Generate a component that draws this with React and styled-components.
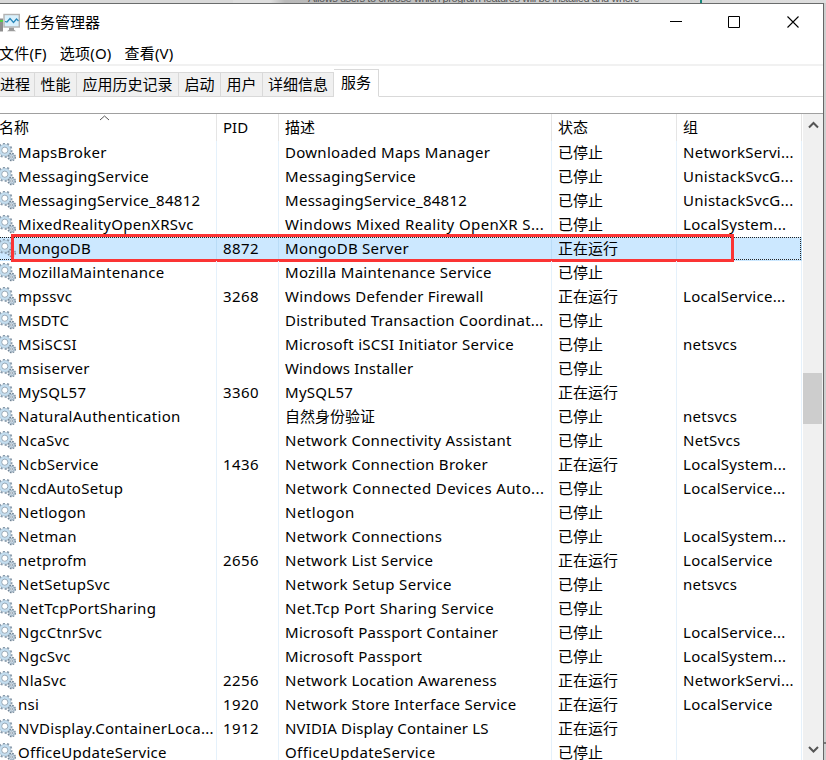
import React from "react";
import styled, { createGlobalStyle, css } from "styled-components";

const GlobalStyle = createGlobalStyle`
  * { box-sizing: border-box; }
  body {
    margin: 0;
    overflow: hidden;
    background: #d2d2d2;
    color: #000;
    font: 15px/24px "Noto Sans", "Noto Sans CJK SC", sans-serif;
  }
`;

const Desktop = styled.div`
  width: 826px;
  height: 760px;
  display: flex;
  flex-direction: column;
  overflow: hidden;
  background: linear-gradient(#cfcfcf 742px, #777 742px, #777 744px, #cfcfcf 744px);
`;

const Backdrop = styled.div`
  height: 3px;
  flex: none;
  display: flex;
  align-items: flex-end;
  overflow: hidden;
  background: linear-gradient(90deg, #d9d9d9 0 233px, #dedede 233px 270px, #b9b9b9 285px, #bebebe 400px, #d5d5d5 600px, #dedede);
`;

const BackdropText = styled.div`
  width: 392px;
  height: 3px;
  margin-left: 308px;
  flex: none;
  display: flex;
  align-items: flex-end;
  border-right: 2px solid #16877b;
  box-sizing: content-box;
  span {
    font: 11px/12px "Liberation Sans", sans-serif;
    letter-spacing: -0.42px;
    color: #555;
    white-space: nowrap;
    margin-bottom: -1px;
  }
`;

const Window = styled.div`
  width: 824px;
  height: 757px;
  display: flex;
  flex-direction: column;
  background: #fff;
  border-top: 1px solid #6a6c6c;
  border-right: 1px solid #666;
`;

const TitleBar = styled.header`
  height: 37px;
  flex: none;
  display: flex;
  align-items: center;
  svg { display: block; }
`;

const Title = styled.h1`
  flex: 1;
  margin: 0 0 2px 5px;
  font: inherit;
`;

const WindowControls = styled.div`
  display: flex;
  gap: 45px;
  padding: 0 23px 1px 0;
`;

const MenuBar = styled.nav`
  height: 25px;
  flex: none;
  display: flex;
  gap: 13px;
  border-bottom: 2px solid #f1f1f1;
`;

const MenuItem = styled.span`
  white-space: nowrap;
  letter-spacing: 0.2px;
  &:first-child { margin-left: -1px; }
`;

const TabStrip = styled.div`
  height: 31px;
  flex: none;
  display: flex;
  align-items: flex-end;
`;

const Tab = styled.div`
  width: ${(p) => p.$w}px;
  height: 25px;
  flex: none;
  line-height: 22px;
  text-align: center;
  white-space: nowrap;
  background: #f0f0f0;
  border: 1px solid #d9d9d9;
  border-left: 0;
  ${(p) => p.$first && css`padding-right: 7px;`}
  ${(p) => p.$active && css`
    height: 28px;
    background: #fff;
    border-bottom-color: #fff;
    line-height: 24px;
  `}
`;

const TabRest = styled.div`
  flex: 1;
  height: 1px;
  background: #d9d9d9;
`;

const ListView = styled.main`
  height: 647px;
  margin-top: 16px;
  flex: none;
  display: flex;
  border-top: 1px solid #a0a0a0;
`;

const Table = styled.div`
  width: 802px;
  flex: none;
`;

const Row = styled.div`
  position: relative;
  height: 24px;
  display: grid;
  grid-template-columns: 217px 62px 273px 125px 125px;
  ${(p) => p.$selected && css`
    background: #cce8ff;
    &::before {
      content: "";
      position: absolute;
      inset: 0 1px 1px 0;
      border: 1px dotted #222;
      border-left: 0;
    }
  `}
`;

const HeaderRow = styled(Row)`
  height: 27px;
`;

const Cell = styled.div`
  min-width: 0;
  height: 24px;
  display: flex;
  align-items: center;
  padding-left: 6px;
  line-height: 22px;
  white-space: nowrap;
  letter-spacing: ${(p) => p.$spacing || 0}px;
  border-right: 1px solid ${(p) => (p.$selected ? "#b9dcf7" : "#e5f1fb")};
  &:first-child { padding-left: 0; }
`;

const HeaderCell = styled(Cell)`
  height: 27px;
  line-height: 27px;
  border-color: #e5e5e5;
  &:first-child { text-indent: -1px; }
`;

const CellText = styled.span`
  padding-bottom: 2px;
`;

const ServiceName = styled(CellText)`
  margin-left: 2px;
`;

const SortArrow = styled.svg`
  position: absolute;
  left: 99px;
  top: 1px;
`;

const Highlight = styled.div`
  position: absolute;
  left: 11px;
  top: -3px;
  width: 723px;
  height: 28px;
  border: 3px solid #fb3434;
`;

const ScrollBar = styled.aside`
  width: 20px;
  margin-left: 1px;
  display: flex;
  flex-direction: column;
  align-items: center;
  background: #f0f0f0;
  svg { flex: none; }
`;

const Thumb = styled.div`
  width: 19px;
  height: 51px;
  margin: 242px 1px 0 0;
  background: #cdcdcd;
`;

const STOPPED = "已停止";
const RUNNING = "正在运行";

const services = [
  ["MapsBroker", "", "Downloaded Maps Manager", STOPPED, "NetworkServi..."],
  ["MessagingService", "", "MessagingService", STOPPED, "UnistackSvcG..."],
  ["MessagingService_84812", "", "MessagingService_84812", STOPPED, "UnistackSvcG..."],
  ["MixedRealityOpenXRSvc", "", "Windows Mixed Reality OpenXR S...", STOPPED, "LocalSystem...", 0.38],
  ["MongoDB", "8872", "MongoDB Server", RUNNING, ""],
  ["MozillaMaintenance", "", "Mozilla Maintenance Service", STOPPED, ""],
  ["mpssvc", "3268", "Windows Defender Firewall", RUNNING, "LocalService..."],
  ["MSDTC", "", "Distributed Transaction Coordinat...", STOPPED, "", 0.23],
  ["MSiSCSI", "", "Microsoft iSCSI Initiator Service", STOPPED, "netsvcs"],
  ["msiserver", "", "Windows Installer", STOPPED, "", 0.15],
  ["MySQL57", "3360", "MySQL57", RUNNING, ""],
  ["NaturalAuthentication", "", "自然身份验证", STOPPED, "netsvcs", 0],
  ["NcaSvc", "", "Network Connectivity Assistant", STOPPED, "NetSvcs"],
  ["NcbService", "1436", "Network Connection Broker", RUNNING, "LocalSystem..."],
  ["NcdAutoSetup", "", "Network Connected Devices Auto...", STOPPED, "LocalService...", 0.38],
  ["Netlogon", "", "Netlogon", STOPPED, "", 0.5],
  ["Netman", "", "Network Connections", STOPPED, "LocalSystem..."],
  ["netprofm", "2656", "Network List Service", RUNNING, "LocalService"],
  ["NetSetupSvc", "", "Network Setup Service", STOPPED, "netsvcs", 0.38],
  ["NetTcpPortSharing", "", "Net.Tcp Port Sharing Service", STOPPED, "", 0.4],
  ["NgcCtnrSvc", "", "Microsoft Passport Container", STOPPED, "LocalService..."],
  ["NgcSvc", "", "Microsoft Passport", STOPPED, "LocalSystem..."],
  ["NlaSvc", "2256", "Network Location Awareness", RUNNING, "NetworkServi..."],
  ["nsi", "1920", "Network Store Interface Service", RUNNING, "LocalService"],
  ["NVDisplay.ContainerLoca...", "1912", "NVIDIA Display Container LS", RUNNING, "", 0.15],
  ["OfficeUpdateService", "", "OfficeUpdateService", STOPPED, "", 0.38],
];

const tabs = [["进程", 35], ["性能", 42], ["应用历史记录", 102], ["启动", 42], ["用户", 42], ["详细信息", 71], ["服务", 45]];

function GearIcon() {
  return (
    <svg width="16" height="20" viewBox="0 0 16 20">
      <circle cx="4.8" cy="7.2" r="6.7" fill="none" stroke="#8799aa" strokeWidth="2" strokeDasharray="2.1 2.11" />
      <circle cx="4.8" cy="7.2" r="4.6" fill="#fff" stroke="#c4def0" strokeWidth="2.8" />
      <circle cx="4.8" cy="7.2" r="5.9" fill="none" stroke="#9fb2c2" strokeWidth=".5" />
      <circle cx="4.8" cy="7.2" r="3.1" fill="#fff" stroke="#7f94a6" strokeWidth=".8" />
      <circle cx="11.7" cy="14" r="3.6" fill="#dceaf4" stroke="#718394" strokeWidth="1.3" strokeDasharray="1.7 1.13" />
      <circle cx="11.7" cy="14" r="2.6" fill="#e4f1fa" stroke="#91a5b6" strokeWidth=".9" />
      <circle cx="11.7" cy="14" r="1.1" fill="#fff" stroke="#718394" strokeWidth=".7" />
    </svg>
  );
}

function AppIcon() {
  return (
    <svg width="20" height="20" viewBox="0 0 20 20">
      <path d="M0 5.5h3v13H0z" fill="#8d8d8d" />
      <path d="M0 7h3v2H0z" fill="#54cf45" />
      <rect x="4" y="1.5" width="15.3" height="12.5" fill="#d9f0fc" stroke="#b2b2b2" strokeWidth="1.4" />
      <path d="M5 8.5l2 .5 3-3.5 3.5 4 3-3.5 2 2" fill="none" stroke="#2786b9" strokeWidth="1.2" />
      <path d="M9 14.7h5v2l2 1.5H7l2-1.5z" fill="#9b9b9b" />
    </svg>
  );
}

function Controls() {
  return (
    <WindowControls>
      <svg width="14" height="14"><path d="M2 6.5h12" stroke="#000" /></svg>
      <svg width="14" height="14"><path d="M1.5 1.5h11v11h-11z" fill="none" stroke="#000" /></svg>
      <svg width="14" height="14"><path d="M1.5 1.5l11 11m0-11l-11 11" stroke="#000" strokeWidth="1.1" /></svg>
    </WindowControls>
  );
}

export default function App() {
  return (
    <Desktop>
      <GlobalStyle />
      <Backdrop>
        <BackdropText><span>Allows users to choose which program features will be installed and where</span></BackdropText>
      </Backdrop>
      <Window>
        <TitleBar><AppIcon /><Title>任务管理器</Title><Controls /></TitleBar>
        <MenuBar>
          <MenuItem>文件(F)</MenuItem><MenuItem>选项(O)</MenuItem><MenuItem>查看(V)</MenuItem>
        </MenuBar>
        <TabStrip>
          {tabs.map(([label, w], i) => (
            <Tab key={label} $w={w} $first={i === 0} $active={i === tabs.length - 1}>{label}</Tab>
          ))}
          <TabRest />
        </TabStrip>
        <ListView>
          <Table>
            <HeaderRow>
              {["名称", "PID", "描述", "状态", "组"].map((h) => <HeaderCell key={h}>{h}</HeaderCell>)}
              <SortArrow width="11" height="6"><path d="M1 5l4.5-4L10 5" fill="none" stroke="#555" /></SortArrow>
            </HeaderRow>
            {services.map(([name, pid, description, status, group, tracking = 0.28]) => {
              const selected = name === "MongoDB";
              return (
                <Row key={name} $selected={selected}>
                  <Cell $selected={selected} $spacing={0.29}><GearIcon /><ServiceName>{name}</ServiceName></Cell>
                  <Cell $selected={selected} $spacing={0.4}><CellText>{pid}</CellText></Cell>
                  <Cell $selected={selected} $spacing={tracking}><CellText>{description}</CellText></Cell>
                  <Cell $selected={selected}><CellText>{status}</CellText></Cell>
                  <Cell $selected={selected} $spacing={0.27}><CellText>{group}</CellText></Cell>
                  {selected && <Highlight />}
                </Row>
              );
            })}
          </Table>
          <ScrollBar>
            <svg width="19" height="17"><path d="M5 13.5l4.5-4.5 4.5 4.5" fill="none" stroke="#555" strokeWidth="2" /></svg>
            <Thumb />
            <svg width="19" height="336"><path d="M5 323l4.5 4.5L14 323" fill="none" stroke="#555" strokeWidth="2" /></svg>
          </ScrollBar>
        </ListView>
      </Window>
    </Desktop>
  );
}
